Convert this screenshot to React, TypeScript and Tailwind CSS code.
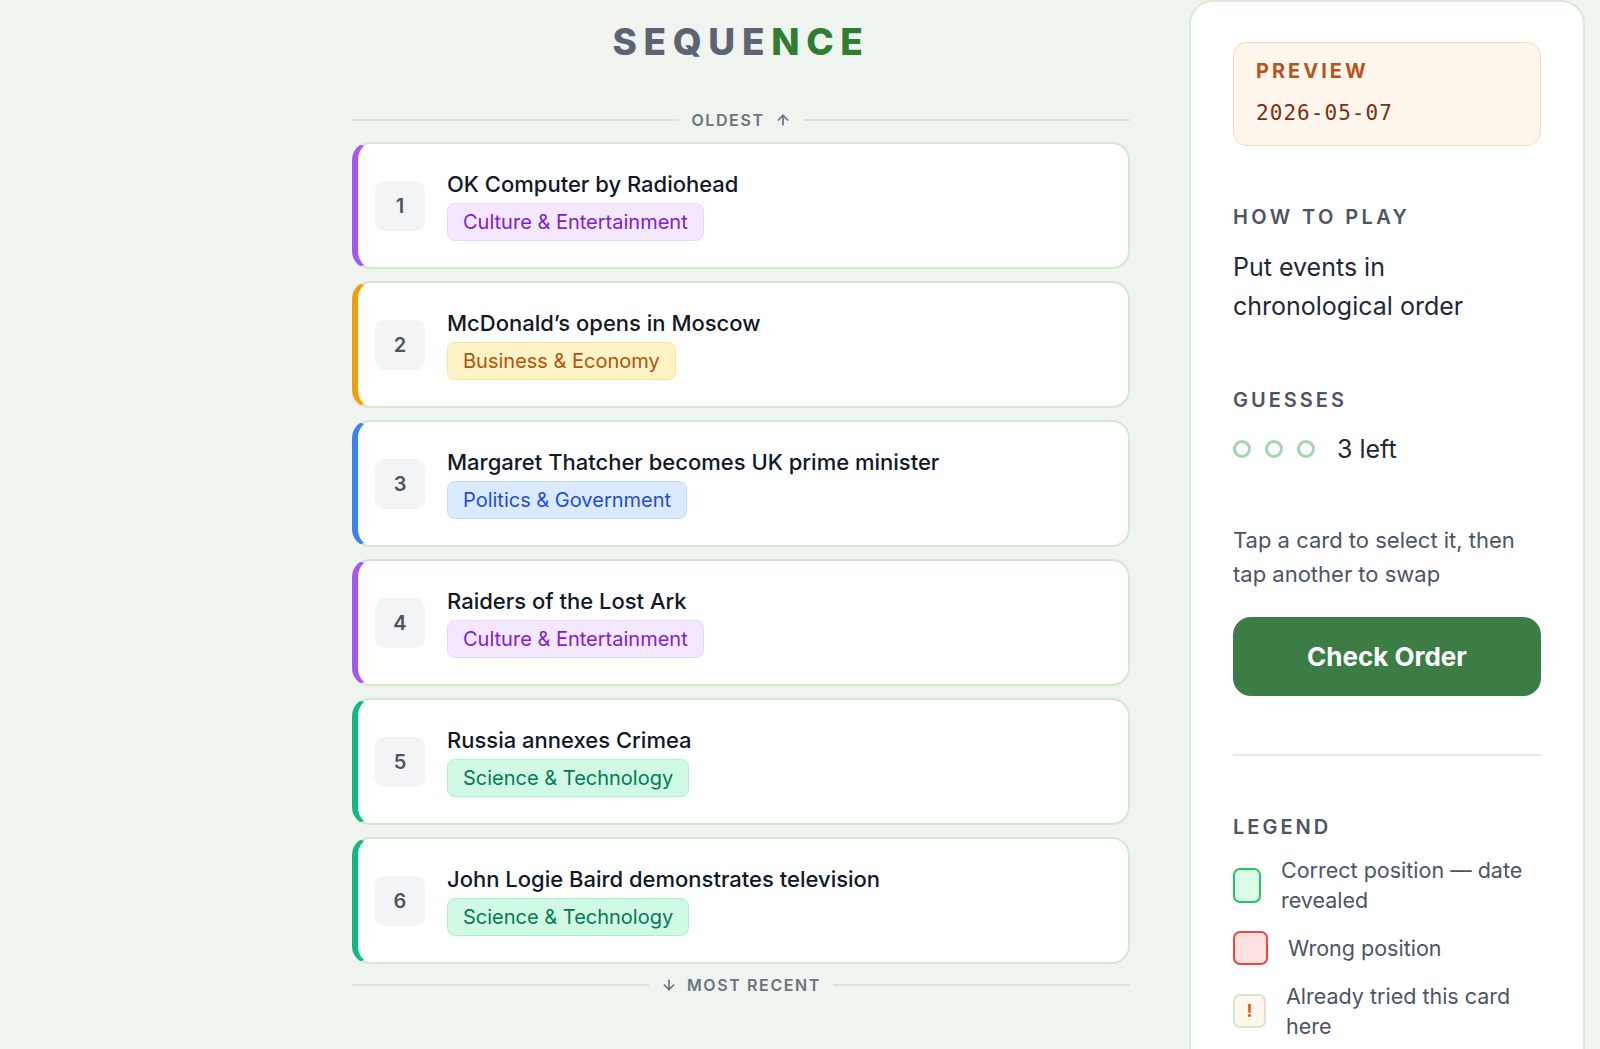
import React from 'react';
import { ArrowUp, ArrowDown } from 'lucide-react';

type Category = 'culture' | 'business' | 'politics' | 'science';

interface EventCard {
  id: number;
  title: string;
  category: Category;
}

const CATEGORY_STYLES: Record<Category, { label: string; bar: string; chip: string }> = {
  culture: {
    label: 'Culture & Entertainment',
    bar: 'border-l-[#a855f7]',
    chip: 'bg-[#f3e8ff] border-[#e9d5ff] text-[#7e22ce]',
  },
  business: {
    label: 'Business & Economy',
    bar: 'border-l-[#f59e0b]',
    chip: 'bg-[#fef3c7] border-[#fde68a] text-[#b45309]',
  },
  politics: {
    label: 'Politics & Government',
    bar: 'border-l-[#3b82f6]',
    chip: 'bg-[#dbeafe] border-[#bfdbfe] text-[#1d4ed8]',
  },
  science: {
    label: 'Science & Technology',
    bar: 'border-l-[#10b981]',
    chip: 'bg-[#d1fae5] border-[#a7f3d0] text-[#047857]',
  },
};

const EVENTS: EventCard[] = [
  { id: 1, title: 'OK Computer by Radiohead', category: 'culture' },
  { id: 2, title: 'McDonald’s opens in Moscow', category: 'business' },
  { id: 3, title: 'Margaret Thatcher becomes UK prime minister', category: 'politics' },
  { id: 4, title: 'Raiders of the Lost Ark', category: 'culture' },
  { id: 5, title: 'Russia annexes Crimea', category: 'science' },
  { id: 6, title: 'John Logie Baird demonstrates television', category: 'science' },
];

const TimelineDivider: React.FC<{ children: React.ReactNode }> = ({ children }) => (
  <div className="flex items-center gap-3 h-6">
    <div className="flex-1 h-[2px] bg-[#d6e7d1]" />
    <div className="flex items-center gap-[10px] text-[16px] font-semibold tracking-[0.1em] text-[#6b7280] leading-6">
      {children}
    </div>
    <div className="flex-1 h-[2px] bg-[#d6e7d1]" />
  </div>
);

const Card: React.FC<{ event: EventCard; index: number }> = ({ event, index }) => {
  const style = CATEGORY_STYLES[event.category];
  return (
    <div
      className={`h-[127px] flex items-center bg-white rounded-[18px] border-2 border-[#d6e7d1] border-l-[6px] ${style.bar} pl-[17px] pr-6 cursor-pointer`}
    >
      <div className="w-[50px] h-[50px] shrink-0 rounded-[10px] bg-[#f3f4f6] flex items-center justify-center text-[20px] font-semibold text-[#4b5563]">
        {index + 1}
      </div>
      <div className="ml-[22px] flex flex-col items-start">
        <div className="text-[22px] leading-[28px] font-medium text-[#111827]">{event.title}</div>
        <span
          className={`mt-[5px] px-[15px] py-[6px] rounded-[8px] border text-[20px] leading-6 font-normal ${style.chip}`}
        >
          {style.label}
        </span>
      </div>
    </div>
  );
};

const SectionLabel: React.FC<{ children: React.ReactNode; className?: string }> = ({ children, className }) => (
  <div className={`text-[20px] leading-7 font-semibold text-[#4b5563] ${className ?? ''}`}>{children}</div>
);

export default function App() {
  const guessesLeft = 3;

  return (
    <div className="h-screen overflow-hidden bg-[#eff5ee] font-['Inter','Noto_Sans',sans-serif]">
      <div className="flex items-start">
        {/* Board */}
        <main className="ml-[352px] w-[778px] shrink-0 pt-[23px]">
          <h1 className="text-center text-[37px] leading-none font-extrabold tracking-[0.18em] text-[#5c6474]">
            SEQUE<span className="text-[#2e7d32]">NCE</span>
          </h1>

          <div className="mt-[48px] mb-[10px]">
            <TimelineDivider>
              <span>OLDEST</span>
              <ArrowUp size={16} strokeWidth={2.5} />
            </TimelineDivider>
          </div>

          <div className="flex flex-col gap-[12px]">
            {EVENTS.map((event, i) => (
              <Card key={event.id} event={event} index={i} />
            ))}
          </div>

          <div className="mt-[9px]">
            <TimelineDivider>
              <ArrowDown size={16} strokeWidth={2.5} />
              <span>MOST RECENT</span>
            </TimelineDivider>
          </div>
        </main>

        {/* Sidebar */}
        <aside className="ml-[59px] w-[396px] shrink-0 h-[1120px] bg-white border-2 border-[#dbe9d6] rounded-[24px] px-[42px] pt-[40px]">
          <div className="rounded-[14px] border border-[#fed7aa] bg-[#fff7ed] px-[22px] pt-[14px] pb-[18px]">
            <div className="text-[20px] leading-7 font-bold tracking-[0.15em] text-[#b9531c]">PREVIEW</div>
            <div className="mt-[14px] text-[21px] leading-7 tracking-[0.05em] text-[#7c2d12] font-['DejaVu_Sans_Mono',monospace]">
              2026-05-07
            </div>
          </div>

          <SectionLabel className="mt-[57px] tracking-[0.17em]">HOW TO PLAY</SectionLabel>
          <p className="mt-[17px] text-[25px] leading-[39px] text-[#1f2937]">
            Put events in
            <br />
            chronological order
          </p>

          <SectionLabel className="mt-[60px] tracking-[0.15em]">GUESSES</SectionLabel>
          <div className="mt-[19px] h-8 flex items-center">
            <div className="flex gap-[14px]">
              {Array.from({ length: 3 }).map((_, i) => (
                <div key={i} className="w-[18px] h-[18px] rounded-full border-[3px] border-[#a5d6a7]" />
              ))}
            </div>
            <span className="ml-[22px] text-[25px] leading-8 text-[#1f2937]">{guessesLeft} left</span>
          </div>

          <p className="mt-[58px] text-[22px] leading-[34px] text-[#4b5563]">
            Tap a card to select it, then tap another to swap
          </p>

          <button className="mt-[26px] w-full h-[79px] rounded-[18px] bg-[#3b7d45] text-white text-[26px] font-bold">
            Check Order
          </button>

          <div className="mt-[58px] h-[2px] bg-[#e3eee0]" />

          <SectionLabel className="mt-[57px] tracking-[0.15em]">LEGEND</SectionLabel>
          <div className="mt-[14px] flex flex-col gap-4 text-[21.5px] leading-[30px] text-[#4b5563]">
            <div className="flex items-center gap-5">
              <div className="w-[28px] h-[35px] shrink-0 rounded-[7px] border-2 border-[#22c55e] bg-[#dcfce7]" />
              <span>Correct position — date revealed</span>
            </div>
            <div className="flex items-center gap-5">
              <div className="w-[35px] h-[34px] shrink-0 rounded-[7px] border-2 border-[#ef4444] bg-[#fee2e2]" />
              <span>Wrong position</span>
            </div>
            <div className="flex items-center gap-5">
              <div className="w-[33px] h-[34px] shrink-0 rounded-[7px] border-2 border-[#d4e8cf] bg-[#fff7ed] flex items-center justify-center text-[18px] font-bold text-[#ea580c]">
                !
              </div>
              <span>Already tried this card here</span>
            </div>
          </div>
        </aside>
      </div>
    </div>
  );
}
